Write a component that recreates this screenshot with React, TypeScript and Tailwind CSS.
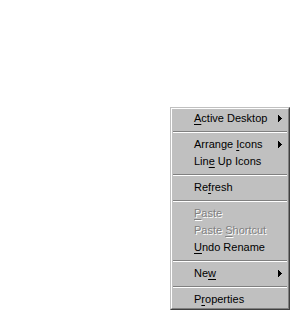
import React from "react"

type Item =
  | { sep: true }
  | { sep?: false; pre: string; key: string; post: string; disabled?: boolean; sub?: boolean }

const items: Item[] = [
  { pre: "", key: "A", post: "ctive Desktop", sub: true },
  { sep: true },
  { pre: "Arrange ", key: "I", post: "cons", sub: true },
  { pre: "Lin", key: "e", post: " Up Icons" },
  { sep: true },
  { pre: "Re", key: "f", post: "resh" },
  { sep: true },
  { pre: "", key: "P", post: "aste", disabled: true },
  { pre: "Paste ", key: "S", post: "hortcut", disabled: true },
  { pre: "", key: "U", post: "ndo Rename" },
  { sep: true },
  { pre: "Ne", key: "w", post: "", sub: true },
  { sep: true },
  { pre: "P", key: "r", post: "operties" },
]

const Arrow = ({ disabled }: { disabled?: boolean }) => (
  <svg width="4" height="7" viewBox="0 0 4 7" className="block">
    <path d="M0 0h1v7H0zM1 1h1v5H1zM2 2h1v3H2zM3 3h1v1H3z" fill={disabled ? "#808080" : "#000"} />
  </svg>
)

export default function App() {
  return (
    <div className="flex h-[310px] w-[291px] items-end justify-end bg-white pr-px font-['Liberation_Sans',Arial,sans-serif]">
      <div className="w-[120px] border border-t-[#c0c0c0] border-l-[#c0c0c0] border-r-[#404040] border-b-[#404040] bg-[#c0c0c0]">
        <div className="border border-t-white border-l-white border-r-[#808080] border-b-[#808080] px-px pt-px">
          {items.map((it, i) =>
            it.sep ? (
              <div key={i} className="flex h-[9px] flex-col justify-center">
                <div className="h-px bg-[#808080]" />
                <div className="h-px bg-white" />
              </div>
            ) : (
              <div
                key={i}
                className={
                  "flex h-[17px] items-center justify-between pl-[21px] pr-[5px] text-[11px] leading-[17px] " +
                  (it.disabled ? "text-[#808080] [text-shadow:1px_1px_0_#fff]" : "text-black")
                }
              >
                <span className="whitespace-pre">
                  {it.pre}
                  <span className="underline underline-offset-[2px]">{it.key}</span>
                  {it.post}
                </span>
                {it.sub && <Arrow disabled={it.disabled} />}
              </div>
            )
          )}
        </div>
      </div>
    </div>
  )
}
